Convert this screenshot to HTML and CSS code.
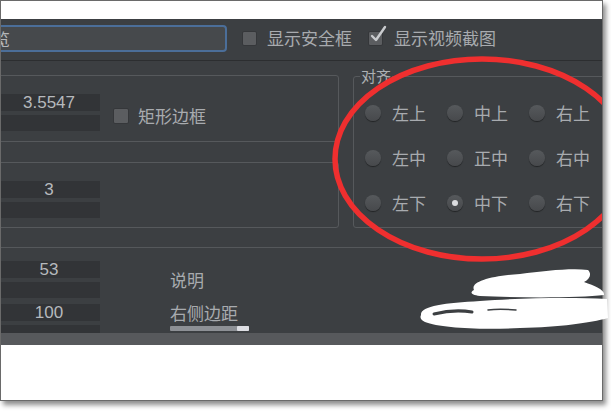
FILE: index.html
```html
<!DOCTYPE html>
<html lang="zh">
<head>
<meta charset="utf-8">
<title>设置</title>
<link rel="stylesheet" href="styles.css">
</head>
<body>
<div class="shot">
  <div class="topstrip"></div>
  <div class="panel">
    <div class="toprow">
      <div class="input">预览</div>
      <label class="chk chk-safe"><span class="box"></span><span class="txt">显示安全框</span></label>
      <label class="chk chk-shot"><span class="box"><svg class="tick" viewBox="0 0 18 18" width="18" height="18"><path d="M3 10 L7 14 L16 1" fill="none" stroke="#c9cbce" stroke-width="2.4" stroke-linecap="round" stroke-linejoin="round"/></svg></span><span class="txt">显示视频截图</span></label>
    </div>
    <div class="mid">
      <div class="leftcol">
        <div class="group g1">
          <div class="spin">
            <div class="field val">3.5547</div>
            <div class="field track"></div>
          </div>
          <label class="chk chk-rect"><span class="box"></span><span class="txt">矩形边框</span></label>
        </div>
        <div class="group g2">
          <div class="spin">
            <div class="field val">3</div>
            <div class="field track"></div>
          </div>
        </div>
      </div>
      <fieldset class="align">
        <legend>对齐</legend>
        <div class="radios">
          <div class="opt"><span class="radio"></span>左上</div>
          <div class="opt"><span class="radio"></span>中上</div>
          <div class="opt"><span class="radio"></span>右上</div>
          <div class="opt"><span class="radio"></span>左中</div>
          <div class="opt"><span class="radio"></span>正中</div>
          <div class="opt"><span class="radio"></span>右中</div>
          <div class="opt"><span class="radio"></span>左下</div>
          <div class="opt"><span class="radio on"></span>中下</div>
          <div class="opt"><span class="radio"></span>右下</div>
        </div>
      </fieldset>
    </div>
    <div class="bottom">
      <div class="spins">
        <div class="spin">
          <div class="field val">53</div>
          <div class="field track"></div>
        </div>
        <div class="spin">
          <div class="field val">100</div>
          <div class="field track"></div>
        </div>
      </div>
      <div class="labels">
        <div class="lbl">说明</div>
        <div class="lbl lbl-margin">右侧边距</div>
        <div class="slider"><span class="thumb"></span></div>
      </div>
    </div>
    <svg class="ring" width="601" height="314" viewBox="0 0 601 314">
      <ellipse cx="481" cy="140" rx="147" ry="100" fill="none" stroke="#ef2f2f" stroke-width="5.5"/>
    </svg>
  </div>
  <div class="graybar"></div>
  <div class="whitebottom"></div>
</div>
<svg class="scribble" width="611" height="411" viewBox="0 0 611 411">
  <path d="M474 290 C470 282 490 276 520 274 C545 271 570 268 588 270 C592 274 590 279 584 282 C595 286 605 290 604 295 C580 298 520 298 480 296 C470 295 470 292 474 290 Z" fill="#fff"/>
  <path d="M421 315 C420 306 445 303 480 301 C520 298 570 297 607 299 L608 318 C590 323 560 327 520 328 C480 330 440 328 425 322 C420 320 420 317 421 315 Z" fill="#fff"/>
  <path d="M434 314 C446 311 460 310 472 312" fill="none" stroke="#3c3f42" stroke-width="3" stroke-linecap="round"/>
  <path d="M488 310 C495 309 505 309 516 310" fill="none" stroke="#3c3f42" stroke-width="1.5" stroke-linecap="round"/>
</svg>
</body>
</html>
```
FILE: styles.css
```css
* { box-sizing: border-box; }
html, body { margin: 0; padding: 0; background: #fff; }
body {
  width: 611px;
  height: 411px;
  position: relative;
  overflow: hidden;
  font-family: "Noto Sans CJK SC", "Noto Sans", sans-serif;
}
.shot {
  width: 603px;
  height: 401px;
  border: 1px solid #6a6a6a;
  box-shadow: 3px 4px 5px rgba(0, 0, 0, 0.45);
  background: #fff;
  display: flex;
  flex-direction: column;
}
.topstrip { height: 18px; flex: none; background: #fff; }
.panel {
  height: 314px;
  flex: none;
  position: relative;
  overflow: hidden;
  background: #3c3f42;
  color: #a8abaf;
  font-size: 17px;
  line-height: 20px;
}
.graybar { height: 12px; flex: none; background: #57595c; }
.whitebottom { flex: 1; background: #fff; }

/* top row */
.toprow {
  height: 42px;
  display: flex;
  align-items: center;
  padding-bottom: 3px;
  border-bottom: 1px solid #2c2e30;
}
.input {
  flex: none;
  margin-left: -41px;
  width: 267px;
  height: 27px;
  border: 2px solid #4b6e99;
  border-radius: 4px;
  background: #46494c;
  padding-left: 14px;
  line-height: 23px;
  color: #b3b6b9;
}
.chk { display: flex; align-items: center; flex: none; }
.box {
  width: 15px;
  height: 15px;
  flex: none;
  background: #5b5d60;
  border: 1px solid #35373a;
  border-radius: 2px;
  position: relative;
}
.chk-safe { margin-left: 15px; }
.chk-safe .txt { margin-left: 10px; }
.chk-shot { margin-left: 16px; }
.chk-shot .txt { margin-left: 11px; }
.tick { position: absolute; left: 0; top: -6px; overflow: visible; }

/* middle */
.mid {
  height: 186px;
  display: flex;
  align-items: flex-start;
  padding-top: 14px;
}
.leftcol {
  flex: none;
  margin-left: -11px;
  width: 349px;
  display: flex;
  flex-direction: column;
  gap: 20px;
}
.group {
  border: 1px solid #56595c;
  border-radius: 3px;
  padding: 18px 0 0 7px;
  display: flex;
  align-items: center;
}
.g1 { height: 67px; align-items: flex-start; }
.g2 { height: 66px; align-items: flex-start; }
.field { width: 102px; background: #323437; }
.val {
  height: 17px;
  font-family: "Liberation Sans", Arial, sans-serif;
  font-size: 17px;
  line-height: 17px;
  text-align: center;
  color: #b6b9bd;
}
.track { height: 16px; margin-top: 4px; }
.chk-rect { margin-left: 13px; margin-top: 12px; }
.chk-rect .box { width: 16px; height: 16px; }
.chk-rect .txt { margin-left: 9px; }

.align {
  flex: none;
  margin: -7px 0 0 14px;
  width: 300px;
  min-width: 0;
  border: 1px solid #56595c;
  border-radius: 3px;
  padding: 6px 0 2px 11px;
}
.align legend {
  font-size: 15px;
  line-height: 16px;
  padding: 0 1px;
  margin-left: -5px;
  color: #adb0b3;
}
.radios {
  display: grid;
  grid-template-columns: repeat(3, 82px);
  grid-auto-rows: 45px;
}
.opt { display: flex; align-items: center; gap: 11px; }
.radio {
  width: 16px;
  height: 16px;
  flex: none;
  border-radius: 50%;
  background: linear-gradient(#56595c, #47494c);
  box-shadow: 0 1px 1px rgba(0, 0, 0, 0.45);
  display: flex;
  align-items: center;
  justify-content: center;
}
.radio.on::after {
  content: "";
  width: 6px;
  height: 6px;
  border-radius: 50%;
  background: #dcdde0;
}

/* bottom */
.bottom {
  border-top: 1px solid #55585b;
  display: flex;
  padding-top: 13px;
}
.spins { flex: none; margin-left: -3px; display: flex; flex-direction: column; gap: 6px; }
.labels { margin-left: 70px; padding-top: 9px; display: flex; flex-direction: column; }
.lbl-margin { margin-top: 13px; }
.slider {
  margin-top: 3px;
  width: 79px;
  height: 5px;
  background: #8d9095;
  border-radius: 1px;
  display: flex;
  justify-content: flex-end;
}
.thumb { width: 12px; height: 5px; background: #dddee3; border-radius: 1px; }

.ring { position: absolute; left: 0; top: 0; pointer-events: none; }
.scribble { position: absolute; left: 0; top: 0; pointer-events: none; }
```
